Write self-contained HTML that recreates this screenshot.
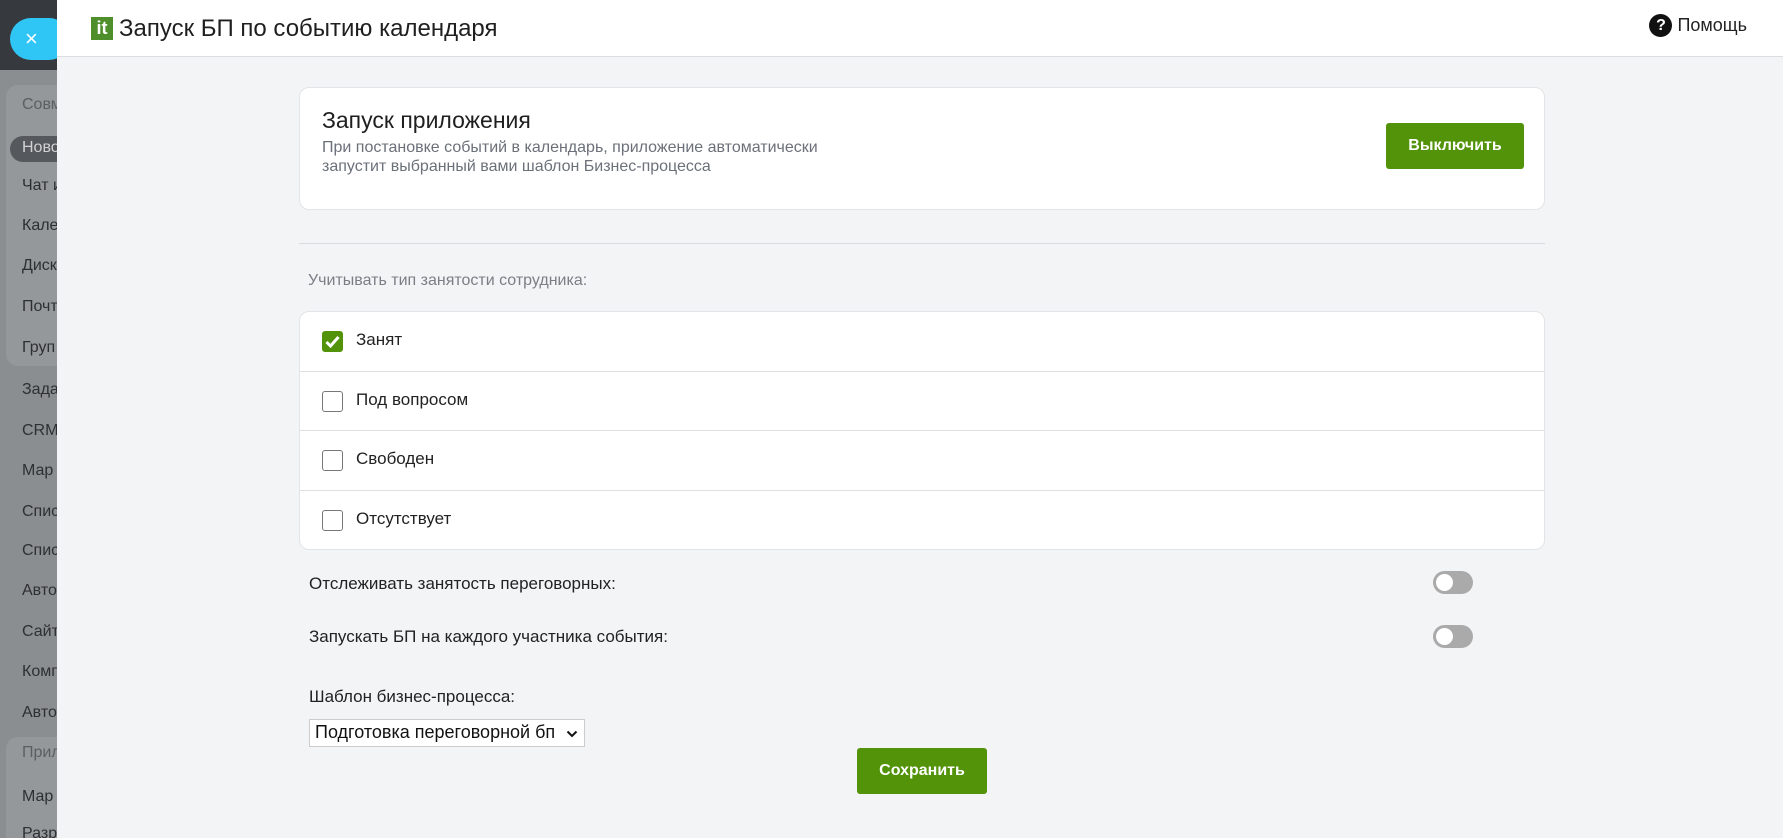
<!DOCTYPE html>
<html><head><meta charset="utf-8"><style>
*{box-sizing:border-box;margin:0;padding:0}
html,body{width:1783px;height:838px;overflow:hidden}
body{font-family:"Liberation Sans","Noto Sans CJK SC",sans-serif;background:#8b8e91;position:relative;color:#333}
.top{position:absolute;left:0;top:0;width:70px;height:70px;background:#36393e}
.grp{position:absolute;left:6px;width:70px;background:#95989b;border-radius:12px}
.si{position:absolute;left:22px;font-size:16px;color:#2c2f33;white-space:nowrap}
.close{position:absolute;left:10px;top:18px;width:60px;height:42px;background:#2fc6f6;border-radius:21px;color:#fff;font-size:22px;line-height:42px;padding-left:15px}
.panel{position:absolute;left:57px;top:0;width:1726px;height:838px;background:#f3f4f6}
.hdr{height:57px;background:#fff;border-bottom:1px solid #dcdde0;position:relative}
.logo{position:absolute;left:34px;top:17px;width:22px;height:23px;background:#4e8f2c;color:#fff;font-weight:bold;font-size:18px;line-height:22px;text-align:center}
.title{position:absolute;left:62px;top:15px;font-size:24px;color:#1f1f1f}
.help{position:absolute;right:36px;top:14px;font-size:18px;color:#222;display:flex;align-items:center;gap:5px}
.help b{display:inline-block;width:23px;height:23px;border-radius:50%;background:#111;color:#fff;text-align:center;line-height:23px;font-size:16px}
.card{position:absolute;left:242px;width:1246px;background:#fff;border:1px solid #e3e4e7;border-radius:10px}
.btn{position:absolute;background:#52930a;color:#fff;font-weight:bold;font-size:16px;border-radius:3px;text-align:center}
.row{height:59.5px;border-bottom:1px solid #dedfe2;position:relative;font-size:17px;color:#222}
.row:last-child{border-bottom:none}
.cb{position:absolute;left:22px;top:19px;width:21px;height:21px;border:1.5px solid #777;border-radius:3px;background:#fff}
.cb.on{background:#52930a;border-color:#52930a}
.row span{position:absolute;left:56px;top:18px}
.lbl{position:absolute;left:252px;font-size:17px;color:#222}
.tg{position:absolute;left:1376px;width:40px;height:23px;border-radius:12px;background:#aaa}
.tg::after{content:"";position:absolute;left:3px;top:3px;width:17px;height:17px;border-radius:50%;background:#fff}
</style></head><body>
<div class="top"></div>
<div class="grp" style="top:85px;height:281px"></div>
<div class="grp" style="top:737px;height:120px"></div>
<div class="si" style="top:96px;color:#5b5e62">Совм</div>
<div style="position:absolute;left:10px;top:136px;width:70px;height:26px;border-radius:13px;background:#55585c"></div>
<div class="si" style="top:139px;color:#d0d2d4">Ново</div>
<div class="si" style="top:177px">Чат и</div>
<div class="si" style="top:217px">Кале</div>
<div class="si" style="top:257px">Диск</div>
<div class="si" style="top:298px">Почт</div>
<div class="si" style="top:339px">Груп</div>
<div class="si" style="top:381px">Зада</div>
<div class="si" style="top:422px">CRM</div>
<div class="si" style="top:462px">Мар</div>
<div class="si" style="top:503px">Спис</div>
<div class="si" style="top:542px">Спис</div>
<div class="si" style="top:582px">Авто</div>
<div class="si" style="top:623px">Сайт</div>
<div class="si" style="top:663px">Комп</div>
<div class="si" style="top:704px">Авто</div>
<div class="si" style="top:744px;color:#5b5e62">Прил</div>
<div class="si" style="top:788px">Мар</div>
<div class="si" style="top:825px">Разр</div>
<div class="close">×</div>
<div class="panel">
 <div class="hdr">
  <div class="logo">it</div>
  <div class="title">Запуск БП по событию календаря</div>
  <div class="help"><b>?</b>Помощь</div>
 </div>
 <div class="card" style="top:87px;height:123px">
  <div style="position:absolute;left:22px;top:19px;font-size:23px;color:#1f1f1f">Запуск приложения</div>
  <div style="position:absolute;left:22px;top:50px;font-size:16px;color:#6b7079;line-height:19px">При постановке событий в календарь, приложение автоматически<br>запустит выбранный вами шаблон Бизнес-процесса</div>
  <div class="btn" style="left:1086px;top:35px;width:138px;height:46px;line-height:46px">Выключить</div>
 </div>
 <div style="position:absolute;left:242px;top:243px;width:1246px;height:1px;background:#dadbde"></div>
 <div style="position:absolute;left:251px;top:272px;font-size:16px;color:#7a7e85">Учитывать тип занятости сотрудника:</div>
 <div class="card" style="top:311px;height:239px">
  <div class="row"><div class="cb on"><svg width="21" height="21" viewBox="0 0 21 21" style="position:absolute;left:-1.5px;top:-1.5px"><path d="M4.5 11l4 4 8-9" stroke="#fff" stroke-width="3" fill="none"/></svg></div><span>Занят</span></div>
  <div class="row"><div class="cb"></div><span>Под вопросом</span></div>
  <div class="row"><div class="cb"></div><span>Свободен</span></div>
  <div class="row"><div class="cb"></div><span>Отсутствует</span></div>
 </div>
 <div class="lbl" style="top:574px">Отслеживать занятость переговорных:</div>
 <div class="tg" style="top:571px"></div>
 <div class="lbl" style="top:627px">Запускать БП на каждого участника события:</div>
 <div class="tg" style="top:625px"></div>
 <div class="lbl" style="top:687px">Шаблон бизнес-процесса:</div>
 <div style="position:absolute;left:252px;top:719px;width:276px;height:28px;background:#fff;border:1px solid #ccc;font-size:18px;color:#111;padding:2px 5px;white-space:nowrap;overflow:hidden">Подготовка переговорной бп<svg width="12" height="8" viewBox="0 0 12 8" style="position:absolute;right:6px;top:10px"><path d="M1.5 1.5l4.5 4.5 4.5-4.5" stroke="#111" stroke-width="2" fill="none"/></svg></div>
 <div class="btn" style="left:800px;top:748px;width:130px;height:46px;line-height:46px">Сохранить</div>
</div>
</body></html>
